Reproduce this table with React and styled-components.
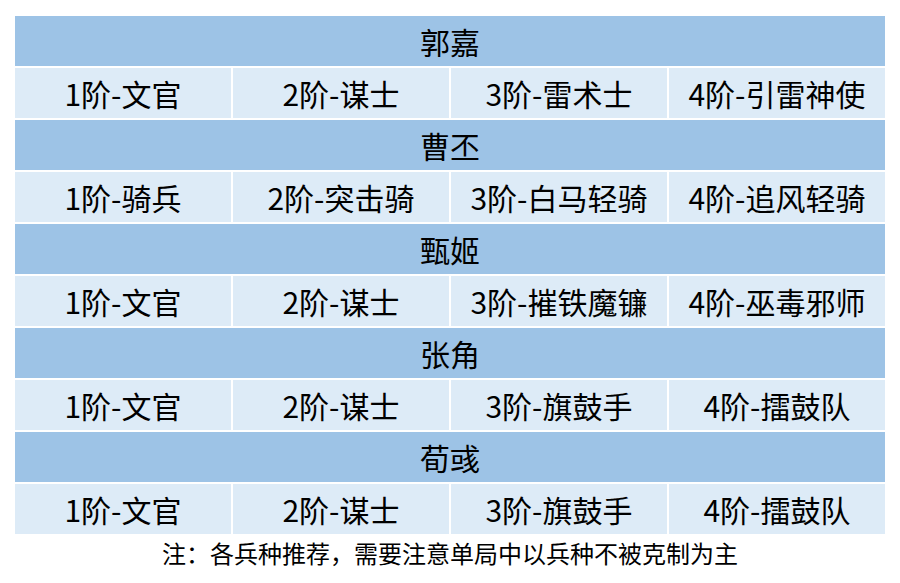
import React from "react";
import styled, { createGlobalStyle } from "styled-components";

const GlobalStyle = createGlobalStyle`
  html, body {
    margin: 0;
    padding: 0;
    background: #ffffff;
  }
  body {
    font-family: "Noto Sans CJK SC", "Noto Sans", sans-serif;
    color: #000000;
  }
`;

const Page = styled.div`
  width: 900px;
  height: 583px;
  padding: 16px 15px 0;
  box-sizing: border-box;
`;

const Table = styled.div`
  display: grid;
  grid-template-columns: repeat(4, 1fr);
  grid-auto-rows: 50px;
  gap: 2px;
  background: #ffffff;
`;

const HeadCell = styled.div`
  grid-column: 1 / -1;
  background: #9dc3e6;
  display: flex;
  align-items: center;
  justify-content: center;
  font-size: 30px;
  line-height: 1;
`;

const Cell = styled.div`
  background: #ddebf7;
  display: flex;
  align-items: center;
  justify-content: center;
  font-size: 30px;
  line-height: 1;
  white-space: nowrap;
`;

const Note = styled.div`
  text-align: center;
  font-size: 24px;
  margin-top: 4px;
  line-height: 30px;
`;

const generals = [
  { name: "郭嘉", units: ["1阶-文官", "2阶-谋士", "3阶-雷术士", "4阶-引雷神使"] },
  { name: "曹丕", units: ["1阶-骑兵", "2阶-突击骑", "3阶-白马轻骑", "4阶-追风轻骑"] },
  { name: "甄姬", units: ["1阶-文官", "2阶-谋士", "3阶-摧铁魔镰", "4阶-巫毒邪师"] },
  { name: "张角", units: ["1阶-文官", "2阶-谋士", "3阶-旗鼓手", "4阶-擂鼓队"] },
  { name: "荀彧", units: ["1阶-文官", "2阶-谋士", "3阶-旗鼓手", "4阶-擂鼓队"] },
];

export default function App() {
  return (
    <Page>
      <GlobalStyle />
      <Table>
        {generals.map(g => (
          <React.Fragment key={g.name}>
            <HeadCell>{g.name}</HeadCell>
            {g.units.map((u, i) => (
              <Cell key={i}>{u}</Cell>
            ))}
          </React.Fragment>
        ))}
      </Table>
      <Note>注：各兵种推荐，需要注意单局中以兵种不被克制为主</Note>
    </Page>
  );
}
